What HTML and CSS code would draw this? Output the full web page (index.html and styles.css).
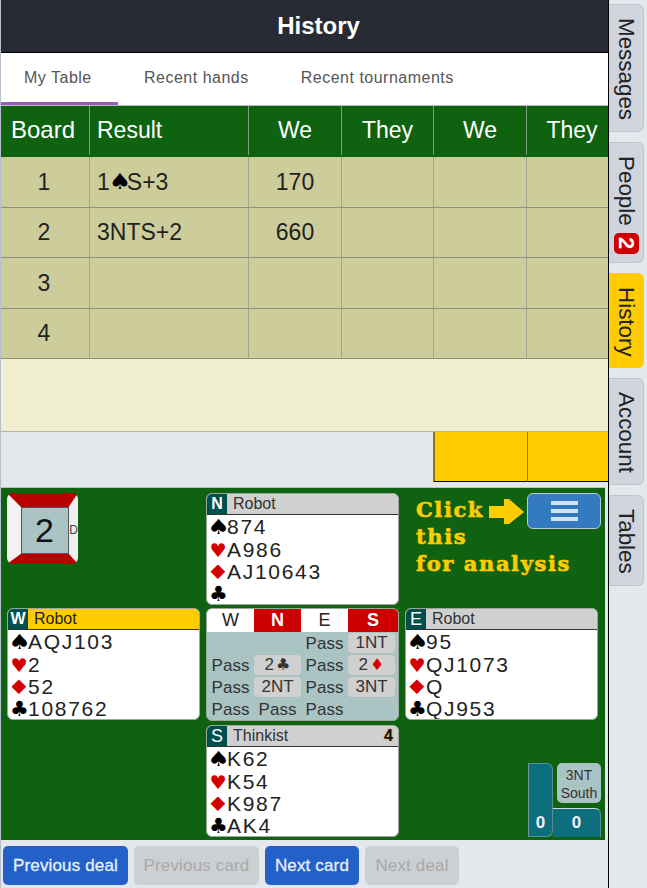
FILE: index.html
```html
<!DOCTYPE html>
<html>

<head>
  <title>History</title>
  <meta name="viewport" content="width=device-width, initial-scale=1.0">
  <link rel="stylesheet" href="styles.css">
</head>

<body>
  <div class="main">
    <div class="title">History</div>
    <div class="tabs">
      <div class="tab active">My Table</div>
      <div class="tab">Recent hands</div>
      <div class="tab">Recent tournaments</div>
    </div>

    <!-- score table -->
    <div class="score-row score-head">
      <div class="cell first">Board</div>
      <div class="cell start">Result</div>
      <div class="cell">We</div>
      <div class="cell">They</div>
      <div class="cell">We</div>
      <div class="cell end">They</div>
    </div>
    <div class="score-row">
      <div class="cell first">1</div>
      <div class="cell start">1<span class="suit-inline">♠</span>S+3</div>
      <div class="cell">170</div>
      <div class="cell"></div>
      <div class="cell"></div>
      <div class="cell"></div>
    </div>
    <div class="score-row">
      <div class="cell first">2</div>
      <div class="cell start">3NTS+2</div>
      <div class="cell">660</div>
      <div class="cell"></div>
      <div class="cell"></div>
      <div class="cell"></div>
    </div>
    <div class="score-row">
      <div class="cell first">3</div>
      <div class="cell start"></div>
      <div class="cell"></div>
      <div class="cell"></div>
      <div class="cell"></div>
      <div class="cell"></div>
    </div>
    <div class="score-row">
      <div class="cell first">4</div>
      <div class="cell start"></div>
      <div class="cell"></div>
      <div class="cell"></div>
      <div class="cell"></div>
      <div class="cell"></div>
    </div>
    <div class="score-blank"></div>
    <div class="score-totals">
      <div class="total"></div>
      <div class="total"></div>
    </div>

    <!-- bridge table -->
    <div class="felt">
      <div class="board-slot">
        <div class="board">
          <div class="board-num">2</div>
          <span class="dealer">D</span>
        </div>
      </div>

      <div class="hand">
        <div class="hand-head"><span class="seat">N</span><span class="name">Robot</span></div>
        <div class="hand-body">
          <div class="line"><span class="suit spade">♠</span>874</div>
          <div class="line"><span class="suit heart">♥</span>A986</div>
          <div class="line"><span class="suit diamond">♦</span>AJ10643</div>
          <div class="line"><span class="suit club">♣</span></div>
        </div>
      </div>

      <div class="hint">
        <div class="hint-first">
          <span class="hint-click">Click</span>
          <svg class="arrow" width="36" height="26" viewBox="0 0 36 26">
            <polygon points="0,7 15,7 15,0 20,0 35,13 20,25 15,25 15,19 0,19" fill="#ffcc00" />
          </svg>
          <button class="menu-btn">
            <span class="bar"></span>
            <span class="bar"></span>
            <span class="bar"></span>
          </button>
        </div>
        <div class="hint-line">this</div>
        <div class="hint-line">for analysis</div>
      </div>

      <div class="hand">
        <div class="hand-head turn"><span class="seat">W</span><span class="name">Robot</span></div>
        <div class="hand-body">
          <div class="line"><span class="suit spade">♠</span>AQJ103</div>
          <div class="line"><span class="suit heart">♥</span>2</div>
          <div class="line"><span class="suit diamond">♦</span>52</div>
          <div class="line"><span class="suit club">♣</span>108762</div>
        </div>
      </div>

      <div class="auction">
        <div class="auction-head">W</div>
        <div class="auction-head vul">N</div>
        <div class="auction-head">E</div>
        <div class="auction-head vul">S</div>
        <div class="call"></div>
        <div class="call"></div>
        <div class="call">Pass</div>
        <div class="call bid">1NT</div>
        <div class="call">Pass</div>
        <div class="call bid">2<span class="suit-small">♣</span></div>
        <div class="call">Pass</div>
        <div class="call bid">2<span class="suit-small red">♦</span></div>
        <div class="call">Pass</div>
        <div class="call bid">2NT</div>
        <div class="call">Pass</div>
        <div class="call bid">3NT</div>
        <div class="call">Pass</div>
        <div class="call">Pass</div>
        <div class="call">Pass</div>
        <div class="call"></div>
      </div>

      <div class="hand">
        <div class="hand-head"><span class="seat thin">E</span><span class="name">Robot</span></div>
        <div class="hand-body">
          <div class="line"><span class="suit spade">♠</span>95</div>
          <div class="line"><span class="suit heart">♥</span>QJ1073</div>
          <div class="line"><span class="suit diamond">♦</span>Q</div>
          <div class="line"><span class="suit club">♣</span>QJ953</div>
        </div>
      </div>

      <div class="empty"></div>

      <div class="hand">
        <div class="hand-head"><span class="seat thin">S</span><span class="name">Thinkist</span><span class="timer">4</span></div>
        <div class="hand-body">
          <div class="line"><span class="suit spade">♠</span>K62</div>
          <div class="line"><span class="suit heart">♥</span>K54</div>
          <div class="line"><span class="suit diamond">♦</span>K987</div>
          <div class="line"><span class="suit club">♣</span>AK4</div>
        </div>
      </div>

      <div class="result-slot">
        <div class="tricks-we">0</div>
        <div class="result-right">
          <div class="contract">3NT<br>South</div>
          <div class="tricks-they">0</div>
        </div>
      </div>
    </div>

    <div class="controls">
      <button class="ctl wide">Previous deal</button>
      <button class="ctl wide off">Previous card</button>
      <button class="ctl">Next card</button>
      <button class="ctl off">Next deal</button>
    </div>
  </div>

  <div class="side">
    <div class="side-tab">Messages</div>
    <div class="side-tab">People<span class="badge">2</span></div>
    <div class="side-tab current">History</div>
    <div class="side-tab">Account</div>
    <div class="side-tab">Tables</div>
  </div>
</body>
</html>
```

FILE: styles.css
```css
/* variables */
:root {
  --page: #e4e8ec;
  --green: #0f620f;
  --row: #cdcc9b;
  --teal: #aac4c4;
  --seat: #004f4f;
  --red: #d40000;
  --yellow: #ffcc00;
  --blue: #2360c8;
}

* {
  box-sizing: border-box;
  font-family: "Liberation Sans", Arial, sans-serif;
}

html,
body {
  margin: 0;
  padding: 0;
  height: 888px;
  overflow: hidden;
  background: var(--page);
}

body {
  display: flex;
}

.main {
  width: 609px;
  height: 888px;
  border-left: 1px solid #b4bfd0;
  border-right: 1px solid #000;
}

/* header & tabs */
.title {
  height: 53px;
  padding-left: 28px;
  line-height: 52px;
  text-align: center;
  font-size: 24px;
  font-weight: bold;
  color: #fff;
  background: #282b34;
  border-bottom: 1px solid #000;
}

.tabs {
  display: flex;
  height: 53px;
  background: #fff;
  border-bottom: 1px solid #bbb;
}

.tab {
  padding: 0 26px 0 26px;
  line-height: 50px;
  font-size: 16px;
  letter-spacing: .5px;
  color: #555;
}

.tab.active {
  width: 117px;
  padding-left: 23px;
  padding-right: 0;
  height: 52px;
  border-bottom: 3px solid #9060b8;
}

/* score table */
.score-row,
.score-totals {
  display: grid;
  grid-template-columns: 89px 159px 93px 92px 93px 81px;
}

.score-row {
  height: 50.5px;
  background: var(--row);
  border-bottom: 1px solid #8f8f7c;
}

.cell {
  display: flex;
  align-items: center;
  justify-content: center;
  padding-top: 1px;
  font-size: 23px;
  color: #222;
  border-right: 1px solid #a5a58c;
}

.cell:last-child {
  border-right: none;
}

.cell.first {
  padding-right: 2px;
}

.cell.start {
  justify-content: flex-start;
  padding-left: 7px;
}

.cell.end {
  padding-left: 9px;
}

.score-head {
  height: 51px;
  background: var(--green);
  border-bottom: none;
}

.score-head .cell {
  padding-top: 0;
  color: #fff;
  height: 49px;
  border-right-color: #7d9f7d;
}

.score-head .cell.first {
  padding: 0 4px 2px 0;
  font-size: 24px;
}

.suit-inline {
  display: inline-block;
  width: 17px;
  text-align: center;
  font-family: "DejaVu Sans", sans-serif;
  font-size: 22px;
  line-height: 1;
  color: #000;
  transform: scaleX(1.15);
}

.score-blank {
  height: 73px;
  background: #efeed0;
  border-bottom: 1px solid #b5b49e;
}

.score-totals {
  height: 50px;
}

.total {
  background: var(--yellow);
  border-left: 1px solid #8c7a10;
  border-bottom: 1px solid #000;
}

.total:first-child {
  grid-column: 5;
  border-left-width: 2px;
  margin-left: -1px;
}

.total:last-child {
  grid-column: 6;
}

/* bridge table */
.felt {
  display: grid;
  grid-template-columns: 193px 193px 193px;
  grid-template-rows: 115px 117px 112px;
  column-gap: 6px;
  align-items: start;
  width: 604px;
  height: 352px;
  margin-top: 6px;
  padding: 5px 0 0 6px;
  background: var(--green);
  box-shadow: 0 -1px 0 #b8c4b8;
}

.board {
  position: relative;
  width: 71px;
  height: 71px;
  border-style: solid;
  border-width: 15px 10px 11px 15px;
  border-color: #b80000 #eeeeee #b80000 #f2f2f2;
  border-radius: 6px;
}

.board-num {
  height: 100%;
  padding-right: 1px;
  text-align: center;
  font-size: 34px;
  line-height: 45px;
  color: #111;
  background: var(--teal);
  outline: 1px solid #556;
}

.dealer {
  position: absolute;
  right: -10px;
  top: 15px;
  font-size: 12px;
  color: #444;
}

.hand {
  height: 112px;
  background: #fff;
  border: 1px solid #9aa89a;
  border-radius: 6px;
  overflow: hidden;
}

.hand-head {
  display: flex;
  align-items: center;
  height: 21px;
  background: #d0d0d0;
  border-bottom: 1px solid #333;
  font-size: 16px;
  color: #333;
}

.hand-head.turn {
  background: var(--yellow);
  color: #222;
}

.seat {
  width: 20px;
  height: 20px;
  margin: 0 6px 0 0;
  line-height: 20px;
  text-align: center;
  font-size: 16px;
  font-weight: bold;
  color: #fff;
  background: var(--seat);
}

.seat.thin {
  font-weight: normal;
  font-size: 18px;
}

.timer {
  margin-left: auto;
  margin-right: 5px;
  font-size: 16px;
  font-weight: bold;
  color: #111;
  text-shadow: 0 0 2px #c90;
}

.hand-body {
  padding: 1px 0 0 2px;
}

.line {
  display: flex;
  align-items: center;
  height: 22.4px;
  line-height: 22px;
  font-size: 21px;
  letter-spacing: 1.7px;
  color: #222;
}

.suit {
  width: 18px;
  font-family: "DejaVu Sans", sans-serif;
  line-height: 20px;
  letter-spacing: 0;
  text-align: center;
  color: #000;
}

.spade {
  font-size: 21px;
  transform: scaleX(1.2);
}

.heart {
  font-size: 19px;
  color: var(--red);
}

.diamond {
  font-size: 20px;
  color: var(--red);
  transform: scaleX(1.3);
}

.club {
  font-size: 21px;
}

.red {
  color: var(--red);
}

/* hint & menu */
.hint {
  width: 196px;
  padding-left: 11px;
  font-family: "DejaVu Serif", serif;
  font-size: 21px;
  font-weight: bold;
  letter-spacing: 1.6px;
  line-height: 27px;
  color: var(--yellow);
}

.hint-first {
  display: flex;
  align-items: flex-start;
  height: 30px;
}

.hint-click,
.hint-line {
  font-family: "DejaVu Serif", serif;
  -webkit-text-stroke: .6px var(--yellow);
  white-space: nowrap;
}

.hint-click {
  margin-top: 3px;
}

.arrow {
  margin: 6px 0 0 5px;
}

.menu-btn {
  display: flex;
  flex-direction: column;
  align-items: center;
  justify-content: center;
  gap: 4px;
  width: 74px;
  height: 36px;
  margin-left: auto;
  padding: 0;
  flex-shrink: 0;
  background: #337ac0;
  border: 1px solid #b8c8d8;
  border-radius: 6px;
}

.bar {
  width: 27px;
  height: 4px;
  background: #d2e2f2;
}

/* auction */
.auction {
  display: grid;
  grid-template-columns: 47px 47px 47px 1fr;
  grid-template-rows: 23px repeat(4, 22px);
  height: 113px;
  background: var(--teal);
  border: 1px solid #9aa89a;
  border-radius: 6px;
  overflow: hidden;
}

.auction-head {
  text-align: center;
  line-height: 23px;
  font-size: 18px;
  background: #fff;
  color: #222;
}

.auction-head.vul {
  background: #cc0000;
  color: #fff;
  font-weight: bold;
}

.call {
  display: flex;
  align-items: center;
  justify-content: center;
  padding-top: 1px;
  font-size: 17px;
  color: #333;
}

.call.bid {
  margin: 1px 0;
  padding-top: 0;
  background: #d0d0d0;
  border-radius: 4px;
}

.call.bid:nth-child(4n) {
  margin-right: 3px;
}

.suit-small {
  margin-left: 2px;
  font-family: "DejaVu Sans", sans-serif;
  font-size: 16px;
  line-height: 1;
}

/* score corner */
.result-slot {
  display: flex;
  justify-content: flex-end;
  align-items: flex-end;
  height: 112px;
  margin-right: -3px;
}

.tricks-we {
  width: 25px;
  height: 74px;
  padding-bottom: 3px;
  display: flex;
  align-items: flex-end;
  justify-content: center;
  font-size: 17px;
  font-weight: bold;
  color: #eef;
  background: #0d6e7e;
  border: 1px solid #5c8c90;
  border-left-color: #6f9a9a;
  border-radius: 0 6px 6px 0;
}

.result-right {
  display: flex;
  flex-direction: column;
  align-items: flex-end;
  width: 48px;
}

.contract {
  width: 44px;
  height: 40px;
  margin-bottom: 5px;
  padding-top: 3px;
  text-align: center;
  font-size: 14px;
  line-height: 18px;
  color: #333;
  background: var(--teal);
  border-radius: 5px;
}

.tricks-they {
  width: 48px;
  height: 29px;
  line-height: 27px;
  text-align: center;
  font-size: 17px;
  font-weight: bold;
  color: #eef;
  background: #0d6e7e;
  border-top: 1px solid #d0dada;
  border-right: 1px solid #5c8c90;
  border-radius: 0 6px 0 0;
}

/* bottom buttons */
.controls {
  display: flex;
  gap: 6px;
  padding: 6px 0 0 2px;
}

.ctl {
  width: 94px;
  height: 39px;
  padding: 0;
  border: none;
  border-radius: 5px;
  font-size: 17px;
  letter-spacing: .15px;
  -webkit-text-stroke: .3px #e8f0ff;
  color: #e8f0ff;
  background: var(--blue);
}

.ctl.wide {
  width: 125px;
}

.ctl.off {
  color: #a8a8a8;
  -webkit-text-stroke: 0;
  background: #cdd0d3;
}

/* side tabs */
.side {
  display: flex;
  flex-direction: column;
  align-items: flex-start;
  gap: 10px;
  padding-top: 4px;
}

.side-tab {
  display: flex;
  align-items: center;
  width: 35px;
  padding: 13px 0 11px;
  writing-mode: vertical-rl;
  font-size: 22.4px;
  color: #222;
  background: #d0d4dc;
  border: 1px solid #c0c4cc;
  border-left: none;
  border-radius: 0 6px 6px 0;
}

.side-tab.current {
  background: var(--yellow);
  border-color: var(--yellow);
}

.badge {
  display: block;
  margin-top: 7px;
  margin-bottom: -3px;
  width: 25px;
  height: 21px;
  line-height: 25px;
  text-align: center;
  font-size: 22px;
  font-weight: bold;
  color: #fff;
  background: #cc0000;
  border-radius: 5px;
}
```
